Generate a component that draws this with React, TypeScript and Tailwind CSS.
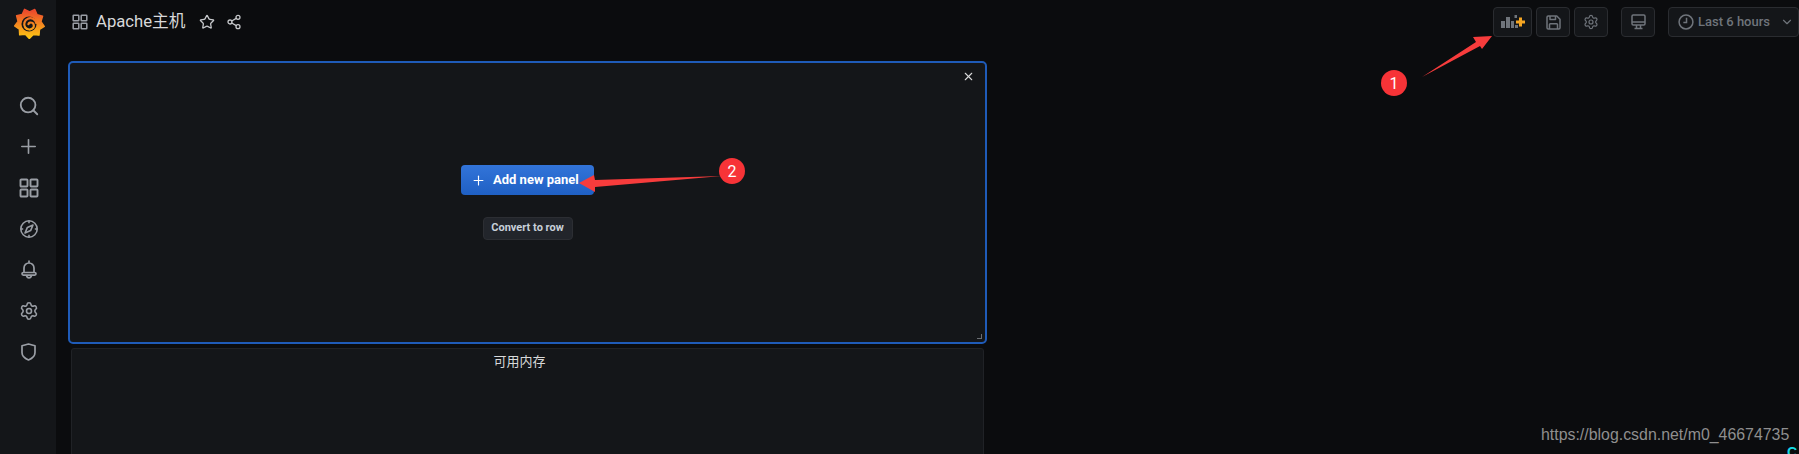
import React from 'react';
import { Search, Plus, Settings, Star, Share2, ChevronDown, X } from 'lucide-react';

const FONT = "font-['Roboto','Noto_Sans_CJK_SC',sans-serif]";

const GrafanaLogo = () => {
  // sun shaped outline with rays
  const points: string[] = [];
  const rays = 9;
  for (let i = 0; i < rays * 2; i++) {
    const r = i % 2 === 0 ? 15.5 : 12;
    const a = (Math.PI * i) / rays - Math.PI / 2.6;
    points.push(`${16 + r * Math.cos(a)},${16 + r * Math.sin(a)}`);
  }
  return (
    <svg width="31" height="31" viewBox="0 0 32 32">
      <defs>
        <linearGradient id="gf" gradientUnits="userSpaceOnUse" x1="16" y1="30" x2="16" y2="3">
          <stop offset="0" stopColor="#fcc314" />
          <stop offset="1" stopColor="#ec4a2c" />
        </linearGradient>
      </defs>
      <polygon points={points.join(' ')} fill="url(#gf)" stroke="url(#gf)" strokeWidth="1.5" strokeLinejoin="round" />
      <circle cx="15.5" cy="16.5" r="7.8" fill="#141619" />
      <path d="M23 15.500c-.8-4.300-5.300-6-8.700-4.500-3.700 1.600-4.800 6.200-2.700 9.100 1.900 2.600 6 2.800 8 .6 1.400-1.600 1.100-4.200-.6-5.300-1.500-.9-3.600-.3-4.100 1.300" fill="none" stroke="url(#gf)" strokeWidth="2.300" strokeLinecap="round" />
    </svg>
  );
};

const GridIcon = ({ size, className }: { size: number; className?: string }) => (
  <svg width={size} height={size} viewBox="0 0 20 20" fill="none" stroke="currentColor" strokeWidth="1.9" className={className}>
    <rect x="1.5" y="1.5" width="7" height="7" rx="0.8" />
    <rect x="11.5" y="1.5" width="7" height="7" rx="0.8" />
    <rect x="1.5" y="11.5" width="7" height="7" rx="0.8" />
    <rect x="11.5" y="11.5" width="7" height="7" rx="0.8" />
  </svg>
);

const CompassIcon = () => (
  <svg width="20" height="20" viewBox="0 0 20 20" fill="none" stroke="currentColor" strokeWidth="1.6">
    <circle cx="10" cy="10" r="8.2" />
    <path d="M10 1.8v2.400M10 15.800v2.400M1.800 10h2.400M15.800 10h2.400" />
    <path d="M14 6l-2.400 5.600L6 14l2.400-5.600z" strokeLinejoin="round" />
  </svg>
);

const BellIcon = () => (
  <svg width="16" height="19" viewBox="0 0 16 19" fill="none" stroke="currentColor" strokeWidth="1.7">
    <path d="M8 .5v2.200M3 13V8a5 5 0 0 1 10 0v5" />
    <rect x="1" y="12.500" width="14" height="2.600" rx="1.300" />
    <path d="M5.500 15.500c.4 1.600 1.300 2.300 2.500 2.300s2.100-.7 2.500-2.300" />
  </svg>
);

const ShieldIcon = () => (
  <svg width="15" height="18" viewBox="0 0 15 18" fill="none" stroke="currentColor" strokeWidth="1.7" strokeLinejoin="round">
    <path d="M1 2.800 7.500 1 14 2.800v6.700c0 3.400-2.600 5.900-6.500 7.500C3.600 15.400 1 12.900 1 9.500z" />
  </svg>
);

const AddPanelIcon = () => (
  <svg width="24" height="14" viewBox="0 0 24 14">
    <g fill="#6f747b">
      <rect x="0" y="6" width="4" height="7" />
      <rect x="5" y="2" width="4" height="11" />
      <rect x="10" y="6" width="3" height="7" />
      <rect x="13.500" y="0" width="2.500" height="3" />
      <rect x="14" y="10" width="3" height="3" />
    </g>
    <path d="M19.500 2.500v9M15 7h9" stroke="#f5a623" strokeWidth="3" />
  </svg>
);

const SaveIcon = () => (
  <svg width="15" height="15" viewBox="0 0 15 15" fill="none" stroke="currentColor" strokeWidth="1.5" strokeLinejoin="round">
    <path d="M1 2.200C1 1.500 1.500 1 2.200 1h8.600L14 4.200v8.600c0 .7-.5 1.200-1.200 1.200H2.200C1.500 14 1 13.500 1 12.800z" />
    <path d="M4 1v3.500h5.500V1M3.500 14V9.500c0-.5.300-.8.800-.8h6.400c.5 0 .8.300.8.800V14" />
  </svg>
);

const MonitorIcon = () => (
  <svg width="15" height="16" viewBox="0 0 15 16" fill="none" stroke="currentColor" strokeWidth="1.5">
    <rect x="1" y="1" width="13" height="10" rx="1.200" />
    <path d="M1 8h13M3.500 14.500h8M5.500 11v3.500M9.500 11v3.500" />
  </svg>
);

const ClockIcon = () => (
  <svg width="16" height="16" viewBox="0 0 15 15" fill="none" stroke="currentColor" strokeWidth="1.4">
    <circle cx="7.500" cy="7.500" r="6.500" />
    <path d="M8 3.500V8H5" />
  </svg>
);

const ToolbarButton = ({ className, children }: { className: string; children: React.ReactNode }) => (
  <div className={`h-[30px] flex items-center justify-center rounded-sm border border-[#2a2c30] bg-[#141619] text-[#6f747b] ${className}`}>
    {children}
  </div>
);

const navIcons = [
  { key: 'search', node: <Search size={22} strokeWidth={2} /> },
  { key: 'plus', node: <Plus size={23} strokeWidth={1.7} /> },
  { key: 'grid', node: <GridIcon size={20} /> },
  { key: 'compass', node: <CompassIcon /> },
  { key: 'bell', node: <BellIcon /> },
  { key: 'settings', node: <Settings size={20} strokeWidth={1.9} /> },
  { key: 'shield', node: <ShieldIcon /> },
];

const Annotations = () => (
  <svg className="absolute left-0 top-0 pointer-events-none" width="1799" height="454">
    <polygon points="1422,77 1476,42 1473,37 1492,36 1482,49 1480,46" fill="#f73c3c" />
    <circle cx="1394" cy="83" r="13" fill="#f73337" />
    <polygon points="579,183 594,175 595,180 722,176 595,187 595,192" fill="#f73c3c" />
    <circle cx="732" cy="171" r="13" fill="#f73337" />
    <text x="1394" y="89" textAnchor="middle" fill="#ffffff" fontSize="16" fontFamily="Roboto, sans-serif">1</text>
    <text x="732" y="177" textAnchor="middle" fill="#ffffff" fontSize="16" fontFamily="Roboto, sans-serif">2</text>
  </svg>
);

export default function App() {
  return (
    <div className={`relative flex h-[454px] w-[1799px] overflow-hidden bg-[#0b0c0e] ${FONT}`}>
      {/* Sidebar */}
      <aside className="w-[56px] shrink-0 bg-[#141619] flex flex-col items-center">
        <div className="h-[44px] flex items-center justify-center mt-[1px] pl-[2px]">
          <GrafanaLogo />
        </div>
        <nav className="mt-[40px] pl-[1px] flex flex-col items-center text-[#9a9ea5]">
          {navIcons.map((item) => (
            <div key={item.key} className="h-[41px] w-[56px] flex items-center justify-center">
              {item.node}
            </div>
          ))}
        </nav>
      </aside>

      <main className="flex-1 min-w-0">
        {/* Header */}
        <header className="h-[61px] flex pt-[7px] pl-[16px]">
          <div className="flex h-[30px] items-center">
            <GridIcon size={16} className="text-[#9a9ea5]" />
            <span className="ml-[8px] text-[16.7px] text-[#d8d9da] whitespace-nowrap">Apache主机</span>
            <Star size={16} strokeWidth={1.9} className="ml-[14px] text-[#c7c9cc]" />
            <Share2 size={16} strokeWidth={1.9} className="ml-[11px] text-[#c7c9cc]" />
          </div>
          <div className="ml-auto flex items-start">
            <ToolbarButton className="w-[39px]"><AddPanelIcon /></ToolbarButton>
            <ToolbarButton className="w-[34px] ml-[4px]"><SaveIcon /></ToolbarButton>
            <ToolbarButton className="w-[34px] ml-[4px]"><Settings size={16} strokeWidth={1.8} /></ToolbarButton>
            <ToolbarButton className="w-[34px] ml-[13px]"><MonitorIcon /></ToolbarButton>
            <ToolbarButton className="w-[131px] ml-[13px] justify-start pl-[9px]">
              <ClockIcon />
              <span className="ml-[4px] text-[13px] font-medium whitespace-nowrap">Last 6 hours</span>
              <ChevronDown size={14} className="ml-[10px]" />
            </ToolbarButton>
          </div>
        </header>

        {/* Panels */}
        <div className="ml-[12px] w-[919px]">
          <section className="relative h-[283px] rounded-[5px] border-2 border-[#1f5bb8] bg-[#141619] flex flex-col items-center">
            <X size={13} strokeWidth={2} className="absolute right-[10px] top-[7px] text-[#d8d9da]" />
            <div className="mt-[102px] h-[30px] w-[133px] rounded-sm bg-gradient-to-b from-[#3274d9] to-[#1f60c4] flex items-center pl-[10px] text-white">
              <Plus size={15} strokeWidth={1.8} />
              <span className="ml-[7px] text-[13px] font-bold whitespace-nowrap">Add new panel</span>
            </div>
            <div className="mt-[22px] h-[23px] w-[90px] rounded-sm border border-[#2c2e33] bg-[#22252b] flex items-center justify-center text-[11px] font-bold text-[#c7d0d9] whitespace-nowrap">
              Convert to row
            </div>
            <div className="absolute right-[3px] bottom-[3px] h-[5px] w-[5px] border-r border-b border-[#6b6e73]" />
          </section>
          <section className="mx-[3px] mt-[4px] h-[120px] rounded-[3px] border border-[#202226] bg-[#141619] pt-[4px] pr-[16px] text-center text-[13px] leading-[18px] text-[#d8d9da]">
            可用内存
          </section>
        </div>
      </main>

      <Annotations />
      <span className="absolute left-[1541px] top-[425px] text-[15.9px] leading-[20px] text-[#8f8f8f] font-['Liberation_Sans',sans-serif] whitespace-nowrap">
        https://blog.csdn.net/m0_46674735
      </span>
      <span className="absolute left-[1787px] top-[444px] text-[14px] leading-[16px] font-bold text-[#16d9e3] font-['Liberation_Sans',sans-serif]">
        C
      </span>
    </div>
  );
}
